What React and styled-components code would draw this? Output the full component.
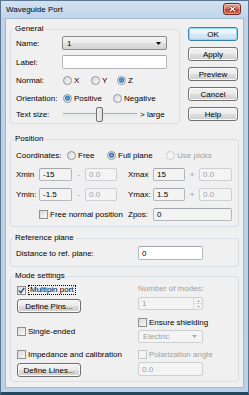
import React from "react";
import styled, { createGlobalStyle, css } from "styled-components";

const GlobalStyle = createGlobalStyle`
  html, body {
    margin: 0;
    padding: 0;
  }
  body {
    font-family: "Liberation Sans", Arial, sans-serif;
    font-size: 8px;
    color: #000;
    background: #fff;
  }
  * {
    box-sizing: border-box;
  }
`;

const Window = styled.div`
  width: 249px;
  height: 395px;
  display: flex;
  flex-direction: column;
  border: 1px solid #5c7691;
  border-bottom: 3px solid #22485b;
  background: linear-gradient(to bottom, #d3e2f2 0px, #bed3ea 18px, #bcd1e8 100%);
`;

const TitleBar = styled.div`
  height: 17px;
  flex: none;
  display: flex;
  align-items: flex-start;
  padding: 0 7px 0 5px;
`;

const Title = styled.div`
  line-height: 17px;
  white-space: nowrap;
`;

const CloseButton = styled.div`
  margin-left: auto;
  margin-top: 2px;
  width: 18px;
  height: 12px;
  border: 1px solid #6a2b20;
  border-radius: 3px;
  background: linear-gradient(to bottom, #e9a99d 0%, #d87560 45%, #c7472e 55%, #d3634a 100%);
  box-shadow: inset 0 0 0 1px rgba(255, 255, 255, 0.35);
  display: flex;
  align-items: center;
  justify-content: center;
`;

const Client = styled.div`
  flex: 1;
  margin: 0 4px 4px 4px;
  background: #f0f0f0;
  border: 1px solid #a3b8cd;
  padding: 5px 4px 0 4px;
  display: flex;
  flex-direction: column;
`;

const TopRow = styled.div`
  display: flex;
  align-items: flex-start;
`;

const Group = styled.fieldset`
  margin: ${(p) => p.$mt || 0}px 0 0 0;
  padding: 0 5px ${(p) => p.$pb || 0}px 5px;
  border: 1px solid #d5dfe5;
  border-radius: 3px;
  min-width: 0;
  width: ${(p) => (p.$w ? `${p.$w}px` : "auto")};
  flex: none;
`;

const Legend = styled.legend`
  padding: 0 2px;
  margin-left: -3px;
  height: 10px;
  line-height: 10px;
`;

const Row = styled.div`
  display: flex;
  align-items: center;
  height: ${(p) => p.$h}px;
  margin-top: ${(p) => p.$mt || 0}px;
`;

const FieldLabel = styled.span`
  width: ${(p) => (p.$w ? `${p.$w}px` : "auto")};
  flex: none;
  white-space: nowrap;
  color: ${(p) => (p.$disabled ? "#a0a0a0" : "#000")};
  padding-left: ${(p) => p.$pl || 0}px;
`;

const TextBox = styled.input`
  width: ${(p) => p.$w}px;
  height: ${(p) => p.$h || 13}px;
  margin: 0;
  padding: 0 3px;
  font: inherit;
  color: #000;
  border: 1px solid #b4b8bd;
  border-top-color: #a4a8ad;
  border-radius: 2px;
  background: ${(p) => (p.$readOnlyLook ? "#f3f3f3" : "#fff")};
  outline: none;
  &:disabled {
    color: #a0a0a0;
    background: #f4f4f4;
    border-color: #cdd0d3;
  }
`;

const Combo = styled.div`
  width: ${(p) => p.$w}px;
  height: ${(p) => p.$h}px;
  display: flex;
  align-items: center;
  padding: 0 5px 0 4px;
  border-radius: 2px;
  ${(p) =>
    p.$disabled
      ? css`
          border: 1px solid #cdd0d3;
          background: #f4f4f4;
          color: #a0a0a0;
        `
      : css`
          border: 1px solid #8a8a8a;
          background: linear-gradient(to bottom, #f4f4f4 0%, #ececec 50%, #dfdfdf 51%, #d4d4d4 100%);
          color: #000;
        `}
  svg {
    margin-left: auto;
  }
`;

const Spin = styled.div`
  width: 65px;
  height: 13px;
  display: flex;
  border: 1px solid #cdd0d3;
  border-radius: 2px;
  background: #f4f4f4;
  color: #a0a0a0;
`;

const SpinValue = styled.span`
  flex: 1;
  line-height: 11px;
  padding-left: 3px;
`;

const SpinArrows = styled.div`
  width: 9px;
  display: flex;
  flex-direction: column;
  border-left: 1px solid #d9dcdf;
`;

const SpinHalf = styled.div`
  flex: 1;
  display: flex;
  align-items: center;
  justify-content: center;
  border-bottom: ${(p) => (p.$top ? "1px solid #d9dcdf" : "none")};
`;

const Option = styled.label`
  display: flex;
  align-items: center;
  width: ${(p) => (p.$w ? `${p.$w}px` : "auto")};
  flex: none;
  white-space: nowrap;
  color: ${(p) => (p.$disabled ? "#a0a0a0" : "#000")};
`;

const RadioDot = styled.span`
  width: 9px;
  height: 9px;
  flex: none;
  margin-right: 2px;
  border-radius: 50%;
  border: 1px solid ${(p) => (p.$disabled ? "#c6c9cc" : "#8e959b")};
  background: ${(p) =>
    p.$checked
      ? "radial-gradient(circle at 50% 45%, #7cc0ee 0, #2a6db3 2.2px, #e8ecef 2.9px, #f6f7f8 100%)"
      : p.$disabled
      ? "#f4f4f4"
      : "linear-gradient(135deg, #d6d8da, #f8f9fa)"};
`;

const CheckBox = styled.span`
  width: 9px;
  height: 9px;
  flex: none;
  margin-right: 2px;
  border: 1px solid ${(p) => (p.$disabled ? "#c6c9cc" : "#8e8f8f")};
  background: ${(p) => (p.$disabled ? "#f4f4f4" : "linear-gradient(135deg, #d8d8d8, #f9f9f9)")};
  display: flex;
  align-items: center;
  justify-content: center;
`;

const FocusText = styled.span`
  border: 1px dotted #000;
  padding: 0 1px;
  line-height: 8px;
`;

const Slider = styled.div`
  position: relative;
  width: 74px;
  height: 15px;
  flex: none;
  &::before {
    content: "";
    position: absolute;
    left: 0;
    right: 0;
    top: 6px;
    height: 3px;
    border-top: 1px solid #b0b0b0;
    background: #e7eaea;
  }
`;

const Thumb = styled.div`
  position: absolute;
  left: 33px;
  top: 0;
  width: 7px;
  height: 15px;
  border: 1px solid #707070;
  border-radius: 2px;
  background: linear-gradient(to right, #f4f4f4, #dadada);
`;

const ButtonColumn = styled.div`
  margin: 3px 0 0 8px;
  display: flex;
  flex-direction: column;
  gap: 6px;
`;

const PushButton = styled.button`
  width: ${(p) => p.$w}px;
  height: 14px;
  margin: 0;
  padding: 0;
  font: inherit;
  color: #000;
  border-radius: 3px;
  border: 1px solid ${(p) => (p.$default ? "#3c7fb1" : "#707070")};
  background: ${(p) =>
    p.$default
      ? "linear-gradient(to bottom, #f2f8fc 0%, #e6f1f9 50%, #d5e7f4 51%, #c9e0f0 100%)"
      : "linear-gradient(to bottom, #f2f2f2 0%, #ebebeb 50%, #dddddd 51%, #cfcfcf 100%)"};
  box-shadow: inset 0 0 0 1px ${(p) => (p.$default ? "#8fdcf8" : "#fbfbfb")};
`;

const CoordGrid = styled.div`
  display: grid;
  grid-template-columns: 23px 33px 13px 32px 36px 32px 14px 33px;
  grid-auto-rows: 13px;
  row-gap: 7px;
  align-items: center;
  margin-top: 7px;
`;

const Sign = styled.span`
  text-align: center;
  color: #9a9a9a;
`;

const Span = styled.div`
  grid-column: ${(p) => p.$col};
  display: flex;
  align-items: center;
`;

const ModeBody = styled.div`
  display: grid;
  grid-template-columns: 122px 65px;
`;

const ModeCol = styled.div`
  display: flex;
  flex-direction: column;
  padding-left: ${(p) => p.$pl || 0}px;
`;

const Item = styled.div`
  display: flex;
  align-items: center;
  height: ${(p) => p.$h}px;
  margin-top: ${(p) => p.$mt || 0}px;
`;

const Arrow = ({ color = "#000" }) => (
  <svg width="5" height="3" viewBox="0 0 5 3">
    <path d="M0 0h5L2.5 3z" fill={color} />
  </svg>
);

const Radio = ({ label, checked, disabled, w }) => (
  <Option $w={w} $disabled={disabled}>
    <RadioDot $checked={checked} $disabled={disabled} />
    {label}
  </Option>
);

const Check = ({ children, checked, disabled, w }) => (
  <Option $w={w} $disabled={disabled}>
    <CheckBox $disabled={disabled}>
      {checked && (
        <svg width="7" height="7" viewBox="0 0 7 7">
          <path d="M0.8 3.6 L2.8 5.6 L6.2 1" fill="none" stroke="#2b4f7e" strokeWidth="1.4" />
        </svg>
      )}
    </CheckBox>
    {children}
  </Option>
);

export default function App() {
  return (
    <>
      <GlobalStyle />
      <Window>
        <TitleBar>
          <Title>Waveguide Port</Title>
          <CloseButton>
            <svg width="7" height="6" viewBox="0 0 7 6">
              <path d="M1 0.8 L6 5.2 M6 0.8 L1 5.2" stroke="#5a1e14" strokeWidth="2.4" />
              <path d="M1 0.8 L6 5.2 M6 0.8 L1 5.2" stroke="#fff" strokeWidth="1.3" />
            </svg>
          </CloseButton>
        </TitleBar>

        <Client>
          <TopRow>
            <Group $w={170} $pb={1}>
              <Legend>General</Legend>
              <Row $h={14} $mt={2}>
                <FieldLabel $w={46}>Name:</FieldLabel>
                <Combo $w={105} $h={14}>
                  1
                  <Arrow />
                </Combo>
              </Row>
              <Row $h={14} $mt={5}>
                <FieldLabel $w={46}>Label:</FieldLabel>
                <TextBox $w={105} $h={14} defaultValue="" />
              </Row>
              <Row $h={12} $mt={5}>
                <FieldLabel $w={47}>Normal:</FieldLabel>
                <Radio w={28} label="X" />
                <Radio w={26} label="Y" />
                <Radio label="Z" checked />
              </Row>
              <Row $h={12} $mt={6}>
                <FieldLabel $w={47}>Orientation:</FieldLabel>
                <Radio w={50} label="Positive" checked />
                <Radio label="Negative" />
              </Row>
              <Row $h={15} $mt={3}>
                <FieldLabel $w={47}>Text size:</FieldLabel>
                <Slider>
                  <Thumb />
                </Slider>
                <FieldLabel $pl={3}>&gt; large</FieldLabel>
              </Row>
            </Group>

            <ButtonColumn>
              <PushButton $w={50} $default>OK</PushButton>
              <PushButton $w={50}>Apply</PushButton>
              <PushButton $w={50}>Preview</PushButton>
              <PushButton $w={50}>Cancel</PushButton>
              <PushButton $w={50}>Help</PushButton>
            </ButtonColumn>
          </TopRow>

          <Group $mt={10} $pb={5}>
            <Legend>Position</Legend>
            <Row $h={11} $mt={6}>
              <FieldLabel $w={51}>Coordinates:</FieldLabel>
              <Radio w={40} label="Free" />
              <Radio w={59} label="Full plane" checked />
              <Radio label="Use picks" disabled />
            </Row>
            <CoordGrid>
              <FieldLabel>Xmin</FieldLabel>
              <TextBox $w={33} $readOnlyLook readOnly defaultValue="-15" />
              <Sign>-</Sign>
              <TextBox $w={32} disabled defaultValue="0.0" />
              <FieldLabel $pl={11}>Xmax</FieldLabel>
              <TextBox $w={32} $readOnlyLook readOnly defaultValue="15" />
              <Sign>+</Sign>
              <TextBox $w={33} disabled defaultValue="0.0" />

              <FieldLabel>Ymin:</FieldLabel>
              <TextBox $w={33} $readOnlyLook readOnly defaultValue="-1.5" />
              <Sign>-</Sign>
              <TextBox $w={32} disabled defaultValue="0.0" />
              <FieldLabel $pl={11}>Ymax:</FieldLabel>
              <TextBox $w={32} $readOnlyLook readOnly defaultValue="1.5" />
              <Sign>+</Sign>
              <TextBox $w={33} disabled defaultValue="0.0" />

              <Span $col="2 / 5">
                <Check>Free normal position</Check>
              </Span>
              <FieldLabel $pl={11}>Zpos:</FieldLabel>
              <Span $col="6 / 9">
                <TextBox $w={79} $readOnlyLook readOnly defaultValue="0" />
              </Span>
            </CoordGrid>
          </Group>

          <Group $mt={6} $pb={6}>
            <Legend>Reference plane</Legend>
            <Row $h={14} $mt={3}>
              <FieldLabel $w={122}>Distance to ref. plane:</FieldLabel>
              <TextBox $w={65} $h={14} defaultValue="0" />
            </Row>
          </Group>

          <Group $mt={4} $pb={4}>
            <Legend>Mode settings</Legend>
            <ModeBody>
              <ModeCol $pl={1}>
                <Item $h={10} $mt={4}>
                  <Check checked>
                    <FocusText>Multipin port</FocusText>
                  </Check>
                </Item>
                <Item $h={14} $mt={4}>
                  <PushButton $w={64}>Define Pins...</PushButton>
                </Item>
                <Item $h={10} $mt={13}>
                  <Check>Single-ended</Check>
                </Item>
                <Item $h={10} $mt={13}>
                  <Check>Impedance and calibration</Check>
                </Item>
                <Item $h={14} $mt={4}>
                  <PushButton $w={64}>Define Lines...</PushButton>
                </Item>
              </ModeCol>

              <ModeCol>
                <Item $h={10} $mt={2}>
                  <FieldLabel $disabled>Number of modes:</FieldLabel>
                </Item>
                <Item $h={13} $mt={4}>
                  <Spin>
                    <SpinValue>1</SpinValue>
                    <SpinArrows>
                      <SpinHalf $top>
                        <svg width="3" height="2" viewBox="0 0 3 2">
                          <path d="M0 2h3L1.5 0z" fill="#b0b0b0" />
                        </svg>
                      </SpinHalf>
                      <SpinHalf>
                        <svg width="3" height="2" viewBox="0 0 3 2">
                          <path d="M0 0h3L1.5 2z" fill="#b0b0b0" />
                        </svg>
                      </SpinHalf>
                    </SpinArrows>
                  </Spin>
                </Item>
                <Item $h={10} $mt={7}>
                  <Check>Ensure shielding</Check>
                </Item>
                <Item $h={13} $mt={3}>
                  <Combo $w={65} $h={13} $disabled>
                    Electric
                    <Arrow color="#a8a8a8" />
                  </Combo>
                </Item>
                <Item $h={10} $mt={6}>
                  <Check disabled>Polarization angle</Check>
                </Item>
                <Item $h={14} $mt={3}>
                  <TextBox $w={65} $h={14} disabled defaultValue="0.0" />
                </Item>
              </ModeCol>
            </ModeBody>
          </Group>
        </Client>
      </Window>
    </>
  );
}
